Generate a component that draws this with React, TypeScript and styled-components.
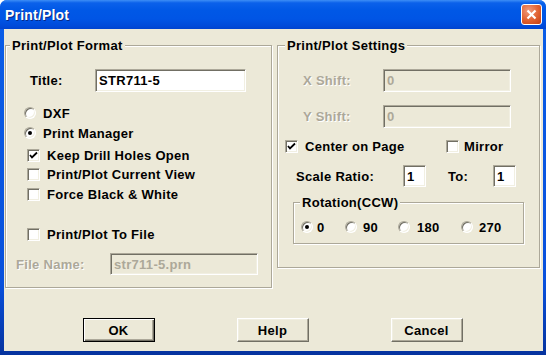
import React from 'react';
import styled, { createGlobalStyle } from 'styled-components';

const GlobalStyle = createGlobalStyle`
  html, body {
    margin: 0;
    padding: 0;
    background: #ffffff;
  }
  body {
    font-family: 'Liberation Sans', Arial, sans-serif;
  }
`;

/** window chrome */
const Window = styled.div`
  width: 546px;
  height: 355px;
  box-sizing: border-box;
  display: flex;
  flex-direction: column;
  background: linear-gradient(180deg, #0a5ee8 0%, #0850dc 80%, #06339e 100%);
  border-radius: 7px 7px 0 0;
  overflow: hidden;
`;
const TitleBar = styled.div`
  flex: none;
  height: 29px;
  display: flex;
  align-items: center;
  justify-content: space-between;
  padding: 0 4px 0 5px;
  background: linear-gradient(
    180deg,
    #3d8ef6 0%,
    #0b61ea 10%,
    #0058e6 35%,
    #0055e5 65%,
    #004ad9 90%,
    #0043cf 100%
  );
`;
const TitleText = styled.span`
  color: #ffffff;
  font-weight: bold;
  font-size: 14px;
  letter-spacing: 0.2px;
  text-shadow: 1px 1px 0 #0a2a86;
`;
const CloseButton = styled.div`
  width: 21px;
  height: 21px;
  box-sizing: border-box;
  border: 1px solid #ffffff;
  border-radius: 3px;
  display: flex;
  align-items: center;
  justify-content: center;
  background: radial-gradient(circle at 35% 30%, #f09b7d 0%, #e0602f 55%, #c33d12 100%);
`;
const Body = styled.div`
  flex: 1;
  margin: 0 3px 4px 4px;
  background: #ece9d8;
  display: flex;
  flex-direction: column;
  padding: 16px 3px 0 1px;
  font-size: 13px;
  font-weight: bold;
  letter-spacing: 0.3px;
  color: #000000;
`;

/** group boxes */
const GroupsRow = styled.div`
  display: flex;
  gap: 5px;
  align-items: flex-start;
`;
const Group = styled.div<{ $w: number; $h: number; $ml?: number; $mt?: number }>`
  position: relative;
  box-sizing: border-box;
  width: ${(p) => p.$w}px;
  height: ${(p) => p.$h}px;
  margin-left: ${(p) => p.$ml || 0}px;
  margin-top: ${(p) => p.$mt || 0}px;
  border: 1px solid #aca899;
  box-shadow: inset 1px 1px 0 #ffffff, 1px 1px 0 #ffffff;
  display: flex;
  flex-direction: column;
`;
const Legend = styled.span<{ $left: number }>`
  position: absolute;
  top: -8px;
  left: ${(p) => p.$left}px;
  padding: 0 2px;
  line-height: 15px;
  background: #ece9d8;
  white-space: nowrap;
`;

/** rows */
const Row = styled.div<{ $mt: number; $h?: number; $pl: number }>`
  display: flex;
  align-items: center;
  margin-top: ${(p) => p.$mt}px;
  height: ${(p) => p.$h || 16}px;
  padding-left: ${(p) => p.$pl}px;
  white-space: nowrap;
`;
const Label = styled.span<{ $w?: number; $disabled?: boolean }>`
  display: inline-block;
  width: ${(p) => (p.$w ? `${p.$w}px` : 'auto')};
  flex: none;
  color: ${(p) => (p.$disabled ? '#aca899' : '#000000')};
  text-shadow: ${(p) => (p.$disabled ? '1px 1px 0 #ffffff' : 'none')};
`;
const TextField = styled.div<{ $w: number; $h?: number; $disabled?: boolean }>`
  box-sizing: border-box;
  flex: none;
  width: ${(p) => p.$w}px;
  height: ${(p) => p.$h || 23}px;
  padding: 0 0 0 3px;
  display: flex;
  align-items: center;
  border: 1px solid;
  border-color: #aca899 #ffffff #ffffff #aca899;
  box-shadow: inset 1px 1px 0 #716f64, inset -1px -1px 0 #f1efe2;
  background: ${(p) => (p.$disabled ? '#ece9d8' : '#ffffff')};
  color: ${(p) => (p.$disabled ? '#aca899' : '#000000')};
`;
const Option = styled.span<{ $gap: number; $w?: number }>`
  display: inline-flex;
  align-items: center;
  gap: ${(p) => p.$gap}px;
  width: ${(p) => (p.$w ? `${p.$w}px` : 'auto')};
  flex: none;
`;
const CheckBox = styled.span`
  box-sizing: border-box;
  width: 13px;
  height: 13px;
  flex: none;
  display: inline-flex;
  align-items: center;
  justify-content: center;
  background: #ffffff;
  border: 1px solid;
  border-color: #aca899 #ffffff #ffffff #aca899;
  box-shadow: inset 1px 1px 0 #716f64, inset -1px -1px 0 #f1efe2;
`;
const Radio = styled.span`
  box-sizing: border-box;
  width: 12px;
  height: 12px;
  flex: none;
  border-radius: 50%;
  display: inline-flex;
  align-items: center;
  justify-content: center;
  background: #ffffff;
  border: 1px solid;
  border-color: #aca899 #ffffff #ffffff #aca899;
  box-shadow: inset 1px 1px 0 #716f64, inset -1px -1px 0 #f1efe2;
`;
const RadioDot = styled.span`
  width: 4px;
  height: 4px;
  border-radius: 50%;
  background: #000000;
`;

/** buttons */
const ButtonRow = styled.div`
  display: flex;
  justify-content: center;
  gap: 82px;
  margin-top: 30px;
`;
const Button = styled.div<{ $default?: boolean }>`
  box-sizing: border-box;
  width: 72px;
  height: 24px;
  display: flex;
  align-items: center;
  justify-content: center;
  background: #ece9d8;
  border: 1px solid;
  border-color: ${(p) => (p.$default ? '#000000' : '#ffffff #716f64 #716f64 #ffffff')};
  box-shadow: ${(p) =>
    p.$default
      ? 'inset 1px 1px 0 #ffffff, inset -1px -1px 0 #716f64, inset -2px -2px 0 #aca899'
      : 'inset -1px -1px 0 #aca899, inset 1px 1px 0 #f1efe2'};
`;

const Check = ({ on }: { on?: boolean }) => (
  <CheckBox>
    {on && (
      <svg width="9" height="9" viewBox="0 0 9 9">
        <path d="M1 4 L3 6.5 L8 1.5" fill="none" stroke="#000" strokeWidth="1.8" />
      </svg>
    )}
  </CheckBox>
);

const RadioBtn = ({ on }: { on?: boolean }) => <Radio>{on && <RadioDot />}</Radio>;

const App = () => {
  return (
    <>
      <GlobalStyle />
      <Window>
        <TitleBar>
          <TitleText>Print/Plot</TitleText>
          <CloseButton>
            <svg width="11" height="11" viewBox="0 0 11 11">
              <path d="M1.5 1.5 L9.5 9.5 M9.5 1.5 L1.5 9.5" stroke="#fff" strokeWidth="2.2" />
            </svg>
          </CloseButton>
        </TitleBar>
        <Body>
          <GroupsRow>
            <Group $w={267} $h={243}>
              <Legend $left={4}>Print/Plot Format</Legend>
              <Row $mt={23} $h={23} $pl={24}>
                <Label $w={65}>Title:</Label>
                <TextField $w={151}>STR711-5</TextField>
              </Row>
              <Row $mt={13} $pl={18}>
                <Option $gap={7}>
                  <RadioBtn />
                  DXF
                </Option>
              </Row>
              <Row $mt={4} $pl={18}>
                <Option $gap={7}>
                  <RadioBtn on />
                  Print Manager
                </Option>
              </Row>
              <Row $mt={6} $pl={21}>
                <Option $gap={7}>
                  <Check on />
                  Keep Drill Holes Open
                </Option>
              </Row>
              <Row $mt={3} $pl={21}>
                <Option $gap={7}>
                  <Check />
                  Print/Plot Current View
                </Option>
              </Row>
              <Row $mt={4} $pl={21}>
                <Option $gap={7}>
                  <Check />
                  Force Black &amp; White
                </Option>
              </Row>
              <Row $mt={24} $pl={21}>
                <Option $gap={7}>
                  <Check />
                  Print/Plot To File
                </Option>
              </Row>
              <Row $mt={11} $h={22} $pl={10}>
                <Label $w={94} $disabled>
                  File Name:
                </Label>
                <TextField $w={148} $h={22} $disabled>
                  str711-5.prn
                </TextField>
              </Row>
            </Group>

            <Group $w={263} $h={223}>
              <Legend $left={7}>Print/Plot Settings</Legend>
              <Row $mt={23} $h={23} $pl={25}>
                <Label $w={80} $disabled>
                  X Shift:
                </Label>
                <TextField $w={128} $disabled>
                  0
                </TextField>
              </Row>
              <Row $mt={13} $h={23} $pl={25}>
                <Label $w={80} $disabled>
                  Y Shift:
                </Label>
                <TextField $w={128} $disabled>
                  0
                </TextField>
              </Row>
              <Row $mt={10} $pl={7}>
                <Option $gap={7} $w={161}>
                  <Check on />
                  Center on Page
                </Option>
                <Option $gap={5}>
                  <Check />
                  Mirror
                </Option>
              </Row>
              <Row $mt={11} $h={22} $pl={18}>
                <Label $w={107}>Scale Ratio:</Label>
                <TextField $w={23} $h={22}>
                  1
                </TextField>
                <Label $w={45} style={{ marginLeft: 22 }}>
                  To:
                </Label>
                <TextField $w={23} $h={22}>
                  1
                </TextField>
              </Row>
              <Group $w={231} $h={42} $ml={15} $mt={15}>
                <Legend $left={6}>Rotation(CCW)</Legend>
                <Row $mt={16} $pl={7}>
                  <Option $gap={4} $w={44}>
                    <RadioBtn on />0
                  </Option>
                  <Option $gap={6} $w={53}>
                    <RadioBtn />
                    90
                  </Option>
                  <Option $gap={7} $w={63}>
                    <RadioBtn />
                    180
                  </Option>
                  <Option $gap={6}>
                    <RadioBtn />
                    270
                  </Option>
                </Row>
              </Group>
            </Group>
          </GroupsRow>
          <ButtonRow>
            <Button $default>OK</Button>
            <Button>Help</Button>
            <Button>Cancel</Button>
          </ButtonRow>
        </Body>
      </Window>
    </>
  );
};

export default App;
